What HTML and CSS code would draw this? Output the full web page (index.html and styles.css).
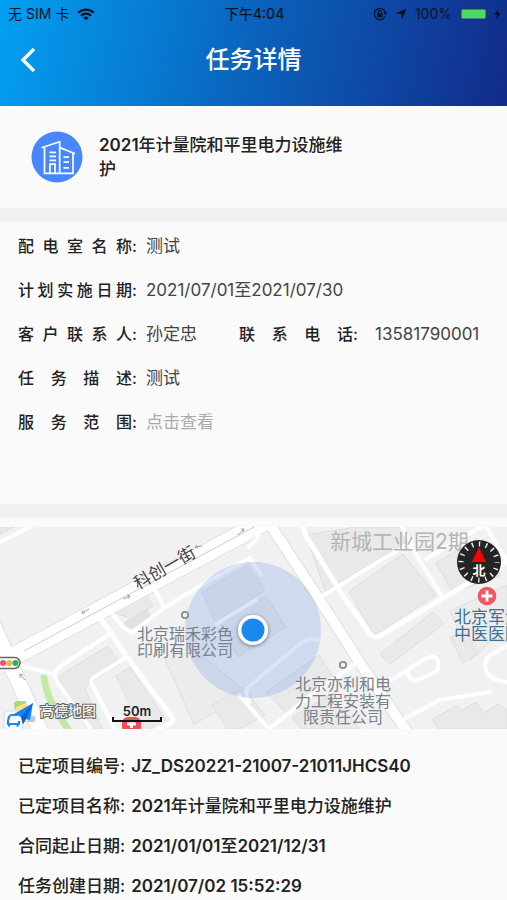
FILE: index.html
```html
<!DOCTYPE html>
<html lang="zh-CN">
<head>
<meta charset="utf-8">
<meta name="viewport" content="width=device-width, initial-scale=1">
<title>任务详情</title>
<link rel="stylesheet" href="styles.css">
</head>
<body>
<header class="header">
  <div class="status">
    <div class="status-side">
      <span>无 SIM 卡</span>
      <svg class="wifi" width="18" height="13" viewBox="0 0 18 13" aria-hidden="true">
        <g fill="none" stroke="#061326" stroke-width="2.2"><path d="M1.2 4.8a11 11 0 0 1 15.6 0"/><path d="M4 7.8a7 7 0 0 1 10 0"/></g>
        <path d="M9 12.6 6.2 9.8a4 4 0 0 1 5.6 0z" fill="#061326"/>
      </svg>
    </div>
    <span class="status-time">下午4:04</span>
    <div class="status-side status-right">
      <svg width="14" height="14" viewBox="0 0 14 14" aria-hidden="true">
        <path d="M12.3 5.2A5.6 5.6 0 1 0 12 9.6" fill="none" stroke="#061326" stroke-width="1.3"/>
        <path d="m10.4 5.6 3.4-.4-1.2 3z" fill="#061326"/>
        <rect x="4.1" y="6.2" width="5.4" height="4" rx=".6" fill="#061326"/>
        <path d="M5.2 6.4V5a1.6 1.6 0 0 1 3.2 0v1.4" fill="none" stroke="#061326" stroke-width="1.1"/>
      </svg>
      <svg class="locate" width="12" height="12" viewBox="0 0 12 12" aria-hidden="true"><path d="M11.700.4 7 11.600 6.200 6 .3 5.200z" fill="#061326"/></svg>
      <span class="percent">100%</span>
      <div class="battery">
        <svg width="30" height="12" viewBox="0 0 30 12" aria-hidden="true">
          <rect x=".5" y=".5" width="26" height="11" rx="2.500" fill="none" stroke="#1d3a70"/>
          <rect x="1.500" y="1.500" width="24" height="9" rx="1" fill="#4cd964"/>
          <path d="M28 4v4q1.800-.5 1.800-2T28 4z" fill="#1d3a70"/>
        </svg>
        <svg width="7" height="12" viewBox="0 0 7 12" aria-hidden="true"><path d="M4.600.5.3 6.800h2.600L2.200 11.500 6.800 5H4z" fill="#061326"/></svg>
      </div>
    </div>
  </div>
  <div class="nav">
    <button class="back" type="button" aria-label="返回">
      <svg width="16" height="26" viewBox="0 0 16 26" aria-hidden="true"><path d="M14 2 3 13l11 11" fill="none" stroke="#fff" stroke-width="3.400"/></svg>
    </button>
    <h1 class="nav-title">任务详情</h1>
  </div>
</header>

<main>
  <section class="summary">
    <svg class="summary-icon" width="52" height="52" viewBox="0 0 52 52" aria-hidden="true">
      <circle cx="26" cy="26" r="25.500" fill="#4687fb"/>
      <g fill="none" stroke="#fff" stroke-width="1.700">
        <path d="M10.500 16.800 29.500 10.500M13.500 16.300V42.300H42V21.500M28.700 10.800V42.300M29 16.600 44 22.800"/>
        <path d="M19 42V33.200h5V42M18.500 21.300h6.500M18.500 25.300h6.500M18.500 29.300h6.500M32.500 26.200h5.500M32.500 31.200h5.500M32.500 36.800h5.500"/>
      </g>
    </svg>
    <h2 class="summary-title"><span class="num">2021</span>年计量院和平里电力设施维护</h2>
  </section>

  <dl class="details">
    <div class="row"><dt class="label">配电室名称</dt><dd class="value">测试</dd></div>
    <div class="row"><dt class="label">计划实施日期</dt><dd class="value">2021/07/01至2021/07/30</dd></div>
    <div class="pair">
      <div class="row"><dt class="label">客户联系人</dt><dd class="value">孙定忠</dd></div>
      <div class="row row-phone"><dt class="label">联系电话</dt><dd class="value">13581790001</dd></div>
    </div>
    <div class="row"><dt class="label">任务描述</dt><dd class="value">测试</dd></div>
    <div class="row"><dt class="label">服务范围</dt><dd class="value"><a class="view" href="#map">点击查看</a></dd></div>
  </dl>

  <section class="map-card" id="map">
    <svg class="map" viewBox="0 0 507 202" preserveAspectRatio="xMidYMid slice" role="img" aria-label="地图">
      <defs>
        <filter id="shadow" x="-40%" y="-40%" width="180%" height="180%"><feDropShadow dx="0" dy="1" stdDeviation="2" flood-opacity=".45"/></filter>
      </defs>
      <rect width="507" height="202" fill="#f1f1f1"/>
      <g fill="#e9e9e9" stroke="#dedede">
        <path d="M0 7 14 0H0z"/>
        <path d="m114 85 31-18 8 12-22 13z"/><path d="m124 96 23-14 3 7-21 14z" fill="#e1e1e1"/>
        <path d="m62 147 46-28 12 18-32 20q-4 3-2 7l16 38H88l-27-43q-3-7 1-12z"/>
        <path d="m116 149 14-9 40 59-20 3-10-3z"/>
        <path d="m164 131 22-15 63 51-55 30z" fill="#ececec"/>
        <path d="m212 178 31-18 22 28-25 14h-13z"/>
        <path d="m202 65 46-27 17 25-50 32z"/><path d="m220 96 46-27 20 31-48 30z"/>
        <path d="m306 8 50-8h45l6 15-82 49z"/>
        <path d="m349 64 54-37 33 41-58 38q-4 2-7-3z"/>
        <path d="m380 127 53-42 11 12-54 40z"/>
        <path d="m436 36 40-24 25 36-48 18z"/>
        <path d="m450 84 57-26v56h-16l-20 19z" fill="#ececec"/><path d="m450 110 16-6 11 23-14 9z"/>
        <path d="m432 192 25-13 5 4 14-8 8 11 14-9 9 6v19h-69z"/>
        <path d="m266 165 53-37 15 24-48 34z"/><path d="m292 190 38-22 30 34h-59z"/>
      </g>
      <g fill="none" stroke-linejoin="round" stroke-linecap="round">
        <g stroke="#dfdfdf">
          <path stroke-width="20" d="M-14 144 270-8"/>
          <path stroke-width="17" d="m-6 100 50 112"/>
          <path stroke-width="12" d="m269-4 54 82 37 58 52 76"/>
        </g>
        <g stroke="#fff" stroke-width="4">
          <path d="m-4 17 38-19M153 58l11 23M109 83l14 17 9 6 32-25 36-22 50-28 11 17"/>
          <path stroke-width="5" d="m98 87 29 43 45 60q3 4-3 7l-20 9"/>
          <path d="m110 107-48 31q-10 6-6 15l6 9 31 43M22 139l31 8M127 130l-34 21q-3 2-1 6l24 47"/>
          <path d="m216 97 40-24M249 175q-4-8-2-14l54-45q8-6 17-3M239 168l31 35M268 203l50-41 42-28"/>
          <path stroke-width="5" d="m303-2 2 9 38 62 25 35q4 8 12 5l63-38 70-40"/>
          <path d="m321 70 50-31 41-24M401-2l14 28 28 45M426 32l38-23 34-17M485-2l22 36"/>
          <path d="m386 156 41-25q9-4 11 4t-5 11l-15 7q-9 2-10-8M509 118l-17 9q-9 6-6 16t21 12M406 191l34-18 50-8M261-2l-4 14-8 8"/>
          <path stroke-width="18" d="M-14 144 270-8"/>
          <path stroke-width="15" d="m-6 100 50 112"/>
          <path stroke-width="10" d="m269-4 54 82 37 58 52 76"/>
        </g>
        <path d="M24 124 256-1" stroke="#d4c9cb"/>
        <path d="M44 151q3 20 13 33l14 24" stroke="#c2e9a5" stroke-width="7"/>
      </g>
      <g fill="none" stroke="#b98a94" stroke-width=".9">
        <path d="m82 86 7-4m-7 4 1-3m-1 3h3M123 72l7-3m0 0-3-1m3 1-2 3M195 20l7-1m-7 1 2-2m-2 2 3 1M238 8l6-6m0 0h-3m3 0-1 3M20 147l5 6m-5-6v4m0-4 3 1"/>
      </g>

      <circle cx="253" cy="103" r="68" fill="#6694e5" fill-opacity=".24"/>

      <g class="map-poi">
        <g fill="#f4f4f4" stroke="#858b91" stroke-width="1.700"><circle cx="185" cy="88" r="3.200"/><circle cx="343" cy="138" r="3.200"/></g>
        <g class="poi-text"><text x="137" y="113">北京瑞禾彩色</text><text x="137" y="129">印刷有限公司</text></g>
        <g class="poi-text poi-center"><text x="343" y="163">北京亦利和电</text><text x="343" y="180">力工程安装有</text><text x="343" y="196">限责任公司</text></g>
        <g class="poi-hospital"><text x="454" y="96">北京军海</text><text x="454" y="113">中医医院</text></g>
        <text class="area-name" x="330" y="22">新城工业园2期</text>
        <text class="road-name" transform="translate(138 63) rotate(-30)">科创一街</text>
      </g>

      <g filter="url(#shadow)"><circle cx="253" cy="103" r="15" fill="#fff"/></g>
      <circle cx="253" cy="103" r="11.500" fill="#1989ee"/>

      <g>
        <circle cx="479" cy="35" r="22" fill="#242424"/>
        <circle cx="479" cy="35" r="18" fill="none" stroke="#eee" stroke-width="5" stroke-dasharray="1.400 5.669" stroke-dashoffset=".7"/>
        <path d="m479 20 7 15h-14z" fill="#f00"/>
        <text class="compass-text" x="479" y="48">北</text>
      </g>
      <g>
        <circle cx="487" cy="69" r="9.300" fill="#ef5964"/><path d="M487 63.500v11M481.500 69h11" stroke="#fff" stroke-width="2.800"/>
      </g>
      <g>
        <rect x="-7" y="130.500" width="27" height="11" rx="5.500" fill="#fff" stroke="#666" stroke-width="1.500"/>
        <circle cx="3" cy="136" r="3" fill="#f0506e"/><circle cx="9.300" cy="136" r="3" fill="#f5b52e"/><circle cx="15.500" cy="136" r="3" fill="#1fb455"/>
      </g>
      <g>
        <path d="M14 177q0-3 4-3h6q3 0 2 4l-3 5h-8z" fill="#a3dd78"/>
        <path d="m16 180 10-4 8 15q2 3-2 4l-18 1z" fill="#ffe08a"/>
        <path d="m28 190 6-1q3 3 0 6h-6z" fill="#a7cdf7"/>
        <rect x="4" y="184" width="19" height="20" rx="5" fill="#fafafa" stroke="#ddd"/>
        <path d="M17 188h-5q-2 0-3 2l-1 4v3h11v-3M9 197v2.500M17.500 197v2.500" fill="none" stroke="#2086ee" stroke-width="2.200" stroke-linejoin="round"/>
        <path d="M33 176 14 187l7 3 2 7 3-5 4 1z" fill="#1684f0"/><path d="m33 176-12 14 2 7 3-5z" fill="#0c62cc"/>
        <text class="brand" x="40" y="189">高德地图</text>
      </g>
      <g>
        <rect x="122" y="190" width="19" height="16" rx="6" fill="#ee4f55"/><path d="M131.500 193v8M127 197h9" stroke="#fff" stroke-width="3"/>
        <path d="M113 190v4h48v-4" fill="none" stroke="#111" stroke-width="2"/>
        <text class="scale" x="137" y="189">50m</text>
      </g>
    </svg>
  </section>

  <dl class="project">
    <div class="line"><dt>已定项目编号:</dt><dd class="num">JZ_DS20221-21007-21011JHCS40</dd></div>
    <div class="line"><dt>已定项目名称:</dt><dd><span class="num">2021</span>年计量院和平里电力设施维护</dd></div>
    <div class="line"><dt>合同起止日期:</dt><dd><span class="num">2021/01/01</span>至<span class="num">2021/12/31</span></dd></div>
    <div class="line"><dt>任务创建日期:</dt><dd class="num">2021/07/02 15:52:29</dd></div>
  </dl>
</main>
</body>
</html>
```
FILE: styles.css
```css
* {
  box-sizing: border-box;
}

body {
  margin: 0;
  background: #fafafa;
  color: #222;
  font-family: Inter, "Noto Sans CJK SC", sans-serif;
  font-size: 16px;
  line-height: 24px;
}

h1, h2, dl, dd {
  margin: 0;
}

.num {
  font-weight: 600;
}

.header {
  height: 106px;
  background: linear-gradient(102deg, #03a0f2 0%, #0a62bc 50%, #122b8b 100%);
  color: #061326;
}

.status {
  display: grid;
  grid-template-columns: 1fr auto 1fr;
  align-items: center;
  height: 28px;
  padding: 0 6px 0 8px;
  font-size: 14px;
}

.status-side {
  display: flex;
  align-items: center;
  gap: 8px;
}

.status-right {
  justify-content: flex-end;
}

.battery {
  display: flex;
  align-items: center;
  gap: 4px;
}

.status-time {
  font-weight: 500;
}

.nav {
  display: grid;
  grid-template-columns: 56px 1fr 56px;
  align-items: center;
  height: 64px;
}

.back {
  display: flex;
  align-items: center;
  justify-content: center;
  height: 48px;
  padding: 0;
  border: 0;
  background: none;
}

.nav-title {
  color: #fff;
  font-size: 24px;
  font-weight: 500;
  line-height: 32px;
  text-align: center;
}

.summary {
  display: flex;
  align-items: center;
  gap: 16px;
  height: 102px;
  padding: 0 154px 0 31px;
}

.summary-icon {
  flex: none;
}

.summary-title {
  font-size: 17px;
  font-weight: 500;
  line-height: 24px;
}

.details {
  min-height: 310px;
  padding: 2px 18px 0;
  border-top: 14px solid #f0f2f2;
  border-bottom: 14px solid #f0f2f2;
}

.pair {
  display: flex;
}

.row {
  display: flex;
  align-items: center;
  height: 44px;
}

.pair .row:first-child {
  width: 221px;
}

.label {
  position: relative;
  flex: none;
  width: 114px;
  margin-right: 14px;
  font-size: 16px;
  font-weight: 500;
  text-align-last: justify;
}

.label::after {
  content: ":";
  position: absolute;
  left: 100%;
}

.row-phone .label {
  margin-right: 22px;
}

.value {
  color: #444;
  font-size: 17px;
  white-space: nowrap;
}

.view {
  color: #aaa;
  text-decoration: none;
}

.map-card {
  padding-top: 9px;
}

.map {
  display: block;
  width: 100%;
}

.map text {
  font-family: Inter, "Noto Sans CJK SC", sans-serif;
}

.map .poi-text {
  fill: #77818c;
  font-size: 16px;
}

.poi-center {
  text-anchor: middle;
}

.poi-hospital {
  fill: #3d7193;
  font-size: 17px;
}

.area-name {
  fill: #b4b4b4;
  font-size: 21px;
}

.road-name {
  fill: #444;
  font-size: 17px;
}

.compass-text {
  fill: #fff;
  font-size: 13px;
  font-weight: 700;
  text-anchor: middle;
}

.brand {
  fill: #f4f4f4;
  stroke: #666;
  stroke-width: 2px;
  paint-order: stroke;
  font-size: 14px;
  font-weight: 500;
}

.scale {
  fill: #222;
  font-size: 13px;
  font-weight: 600;
  text-anchor: middle;
}

.project {
  padding: 17px 18px 0;
  font-size: 17px;
  font-weight: 500;
}

.line {
  display: flex;
  align-items: center;
  gap: 6px;
  height: 40px;
  white-space: nowrap;
}
```
